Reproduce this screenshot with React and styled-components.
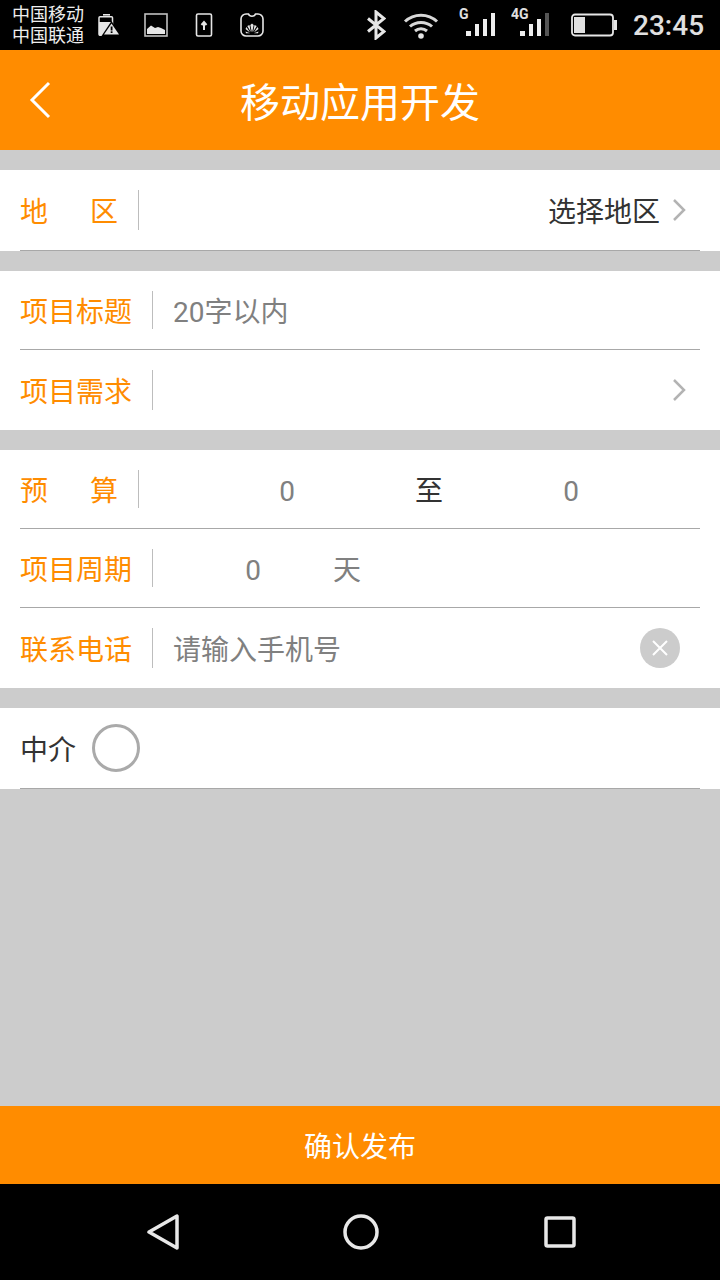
import React from 'react';
import styled, { createGlobalStyle } from 'styled-components';

const orange = '#ff8c00';
const fontStack = 'Roboto, "Noto Sans CJK SC", sans-serif';

const GlobalStyle = createGlobalStyle`
  html, body {
    margin: 0;
    padding: 0;
    background: #cccccc;
  }
  * {
    box-sizing: border-box;
  }
`;

const Page = styled.div`
  display: flex;
  flex-direction: column;
  width: 720px;
  height: 1280px;
  background: #cccccc;
  font-family: ${fontStack};
  overflow: hidden;
`;

const StatusBar = styled.div`
  display: flex;
  align-items: center;
  height: 50px;
  padding-left: 12px;
  background: #000;
  color: #e6e6e6;
  flex-shrink: 0;
`;

const Carriers = styled.div`
  width: 74px;
  font-size: 18px;
  line-height: 21px;
  color: #eeeeee;
  white-space: nowrap;
`;

const StatusIcon = styled.svg`
  display: block;
  flex-shrink: 0;
  margin-left: ${(p) => p.$gap || 0}px;
`;

const Clock = styled.div`
  margin-left: 16px;
  font-size: 28px;
  font-weight: 500;
  line-height: 50px;
  color: #e0e0e0;
  padding-top: 2px;
`;

const Header = styled.header`
  display: flex;
  align-items: center;
  justify-content: center;
  position: relative;
  height: 100px;
  background: ${orange};
  flex-shrink: 0;
`;

const BackButton = styled.svg`
  position: absolute;
  left: 28px;
  top: 31px;
`;

const Title = styled.h1`
  margin: 0;
  font-size: 40px;
  font-weight: 400;
  color: #fff;
`;

const Group = styled.section`
  margin-top: ${(p) => p.$top}px;
  background: #fff;
`;

const Row = styled.div`
  display: flex;
  align-items: center;
  height: ${(p) => p.$h}px;
  margin-left: 20px;
  margin-right: 20px;
  border-bottom: ${(p) => (p.$line ? '1px solid #a8a8a8' : 'none')};
`;

const Label = styled.div`
  display: flex;
  justify-content: space-between;
  width: ${(p) => p.$w}px;
  margin-top: 5px;
  font-size: 28px;
  line-height: 40px;
  color: ${(p) => p.$color || orange};
  flex-shrink: 0;
`;

const Divider = styled.div`
  width: 1px;
  height: ${(p) => p.$h || 38}px;
  margin-left: 20px;
  background: #bdbdbd;
  flex-shrink: 0;
`;

const Hint = styled.div`
  margin-top: 5px;
  margin-left: 20px;
  font-size: 28px;
  line-height: 40px;
  color: #808080;
`;

const Spacer = styled.div`
  flex: 1;
`;

const Value = styled.div`
  margin-top: 5px;
  font-size: 28px;
  line-height: 40px;
  color: #333333;
`;

const Chevron = styled.svg`
  display: block;
  margin-left: 12px;
  margin-right: 14px;
`;

const Budget = styled.div`
  display: grid;
  grid-template-columns: repeat(3, 142px);
  margin-top: 5px;
  margin-left: 77px;
  font-size: 28px;
  line-height: 40px;
  text-align: center;
`;

const Period = styled.div`
  display: grid;
  grid-template-columns: 50px 138px;
  margin-top: 5px;
  margin-left: 75px;
  font-size: 28px;
  line-height: 40px;
  text-align: center;
`;

const Cell = styled.div`
  color: ${(p) => p.$color || '#808080'};
`;

const ClearButton = styled.div`
  display: flex;
  align-items: center;
  justify-content: center;
  width: 40px;
  height: 40px;
  margin-right: 20px;
  border-radius: 50%;
  background: #cccccc;
`;

const Radio = styled.div`
  width: 48px;
  height: 48px;
  margin-left: 16px;
  border: 3px solid #aaaaaa;
  border-radius: 50%;
  background: #fff;
`;

const Filler = styled.div`
  flex: 1;
`;

const SubmitButton = styled.div`
  display: flex;
  align-items: center;
  justify-content: center;
  height: 78px;
  background: ${orange};
  color: #fff;
  font-size: 28px;
  flex-shrink: 0;
`;

const NavBar = styled.nav`
  display: flex;
  align-items: center;
  height: 96px;
  padding-left: 147px;
  background: #000;
  flex-shrink: 0;
`;

const NavIcon = styled.svg`
  display: block;
  margin-left: ${(p) => p.$gap || 0}px;
`;

const BarsIcon = ({ label, lastDim }) => {
  const dx = label === 'G' ? 7 : 9;
  return (
    <StatusIcon width="44" height="40" viewBox="0 0 44 40" $gap={label === 'G' ? 20 : 8}>
      <text x="0" y="14" fontFamily="Roboto, sans-serif" fontWeight="700" fontSize="14" fill="#e0e0e0">
        {label}
      </text>
      <rect x={dx} y="26" width="5" height="5" fill="#eeeeee" />
      <rect x={dx + 9} y="19" width="4" height="12" fill="#eeeeee" />
      <rect x={dx + 17} y="14" width="4" height="17" fill="#eeeeee" />
      <rect x={dx + 25} y="8" width="4" height="23" fill={lastDim ? '#555555' : '#eeeeee'} />
    </StatusIcon>
  );
};

const App = () => {
  return (
    <Page>
      <GlobalStyle />
      <StatusBar>
        <Carriers>
          中国移动
          <br />
          中国联通
        </Carriers>
        {/* battery warning */}
        <StatusIcon width="24" height="24" viewBox="0 0 24 24" $gap={12}>
          <rect x="5" y="1" width="7" height="1.600" fill="#e6e6e6" />
          <rect x="1" y="3.800" width="13.500" height="18.500" rx="1" fill="none" stroke="#e6e6e6" strokeWidth="1.500" />
          <rect x="1" y="9" width="13.500" height="13.500" fill="#e6e6e6" />
          <path d="M13.500 8L3.500 23h20z" fill="#000" />
          <path d="M13.500 10.500L6 21.500h15z" fill="#e6e6e6" />
          <rect x="12.700" y="13.500" width="1.800" height="4" fill="#000" />
          <rect x="12.700" y="18.300" width="1.800" height="1.700" fill="#000" />
        </StatusIcon>
        {/* picture */}
        <StatusIcon width="24" height="24" viewBox="0 0 24 24" $gap={22}>
          <rect x="1" y="1" width="22" height="22" fill="none" stroke="#c0c0c0" strokeWidth="1.600" />
          <path d="M3 21v-5l4-3.500 4 2.500 3-1 3 1 4 2v4z" fill="#e6e6e6" />
        </StatusIcon>
        {/* upload */}
        <StatusIcon width="18" height="24" viewBox="0 0 18 24" $gap={27}>
          <rect x="1.500" y="1" width="15" height="22" rx="1.500" fill="none" stroke="#e6e6e6" strokeWidth="1.600" />
          <path d="M9 17V9.500 M6.500 12L9 9l2.500 3" fill="none" stroke="#e6e6e6" strokeWidth="2" />
        </StatusIcon>
        {/* huawei */}
        <StatusIcon width="24" height="26" viewBox="0 0 24 26" $gap={27}>
          <path d="M6 2h2.500c1 3 6 3 7 0H18c2.500 0 5 2 5 5v12c0 3-2.500 5-5 5H6c-2.500 0-5-2-5-5V7c0-3 2.500-5 5-5z" fill="none" stroke="#e6e6e6" strokeWidth="1.600" />
          <path d="M11.800 20l-1.500-7 1.700-1.500 1.700 1.500-1.500 7z M10.800 20l-3.500-6 2.200-1z M13.200 20l3.500-6-2.200-1z M10 20.500l-4.500-3.500 1-2z M14 20.500l4.500-3.500-1-2z M10 21.200h-4l-.500-1.800z M14 21.200h4l.500-1.800z" fill="#e6e6e6" />
        </StatusIcon>
        {/* bluetooth */}
        <StatusIcon width="20" height="30" viewBox="0 0 20 30" $gap={102}>
          <path d="M2 8.500l16 13-8 6.500V2l8 6.500-16 13" fill="none" stroke="#e6e6e6" strokeWidth="3" />
        </StatusIcon>
        {/* wifi */}
        <StatusIcon width="36" height="28" viewBox="0 0 36 28" $gap={17}>
          <path d="M2 10.500c9-8.500 23-8.500 32 0" fill="none" stroke="#d8d8d8" strokeWidth="3" />
          <path d="M7 15.500c6-5.500 16-5.500 22 0" fill="none" stroke="#d8d8d8" strokeWidth="3" />
          <path d="M12 20c3.500-3 8.500-3 12 0" fill="none" stroke="#d8d8d8" strokeWidth="3" />
          <circle cx="18" cy="25" r="2.800" fill="#e6e6e6" />
        </StatusIcon>
        <BarsIcon label="G" />
        <BarsIcon label="4G" lastDim />
        {/* battery */}
        <StatusIcon width="46" height="24" viewBox="0 0 46 24" $gap={16}>
          <rect x="1" y="1.500" width="41" height="21" rx="3" fill="none" stroke="#e6e6e6" strokeWidth="1.800" />
          <rect x="3" y="4" width="11" height="16" fill="#e0e0e0" />
          <rect x="43" y="7" width="3" height="10" fill="#e6e6e6" />
        </StatusIcon>
        <Clock>23:45</Clock>
      </StatusBar>

      <Header>
        <BackButton width="24" height="38" viewBox="0 0 24 38">
          <path d="M21 2L4 19l17 17" fill="none" stroke="#fff" strokeWidth="3" />
        </BackButton>
        <Title>移动应用开发</Title>
      </Header>

      <Group $top={20}>
        <Row $h={81} $line>
          <Label $w={98}>
            <span>地</span>
            <span>区</span>
          </Label>
          <Divider $h={40} />
          <Spacer />
          <Value>选择地区</Value>
          <Chevron width="14" height="24" viewBox="0 0 14 24">
            <path d="M2 2l10 10L2 22" fill="none" stroke="#b3b3b3" strokeWidth="2.500" />
          </Chevron>
        </Row>
      </Group>

      <Group $top={20}>
        <Row $h={79} $line>
          <Label $w={112}>项目标题</Label>
          <Divider />
          <Hint>20字以内</Hint>
        </Row>
        <Row $h={80}>
          <Label $w={112}>项目需求</Label>
          <Divider $h={40} />
          <Spacer />
          <Chevron width="14" height="24" viewBox="0 0 14 24">
            <path d="M2 2l10 10L2 22" fill="none" stroke="#b3b3b3" strokeWidth="2.500" />
          </Chevron>
        </Row>
      </Group>

      <Group $top={20}>
        <Row $h={79} $line>
          <Label $w={98}>
            <span>预</span>
            <span>算</span>
          </Label>
          <Divider />
          <Budget>
            <Cell>0</Cell>
            <Cell $color="#333333">至</Cell>
            <Cell>0</Cell>
          </Budget>
        </Row>
        <Row $h={79} $line>
          <Label $w={112}>项目周期</Label>
          <Divider />
          <Period>
            <Cell>0</Cell>
            <Cell>天</Cell>
          </Period>
        </Row>
        <Row $h={80}>
          <Label $w={112}>联系电话</Label>
          <Divider $h={40} />
          <Hint>请输入手机号</Hint>
          <Spacer />
          <ClearButton>
            <svg width="16" height="16" viewBox="0 0 16 16">
              <path d="M1 1l14 14M15 1L1 15" fill="none" stroke="#fff" strokeWidth="2" />
            </svg>
          </ClearButton>
        </Row>
      </Group>

      <Group $top={20}>
        <Row $h={81} $line>
          <Label $w={56} $color="#333333">
            中介
          </Label>
          <Radio />
        </Row>
      </Group>

      <Filler />

      <SubmitButton>确认发布</SubmitButton>

      <NavBar>
        <NavIcon width="32" height="38" viewBox="0 0 32 38">
          <path d="M30 3v32L2 19z" fill="none" stroke="#e8e8e8" strokeWidth="3.500" strokeLinejoin="round" />
        </NavIcon>
        <NavIcon width="36" height="36" viewBox="0 0 36 36" $gap={164}>
          <circle cx="18" cy="18" r="16" fill="none" stroke="#e8e8e8" strokeWidth="3.500" />
        </NavIcon>
        <NavIcon width="32" height="32" viewBox="0 0 32 32" $gap={165}>
          <rect x="2" y="2" width="28" height="28" rx="1.500" fill="none" stroke="#e8e8e8" strokeWidth="3.500" />
        </NavIcon>
      </NavBar>
    </Page>
  );
};

export default App;
